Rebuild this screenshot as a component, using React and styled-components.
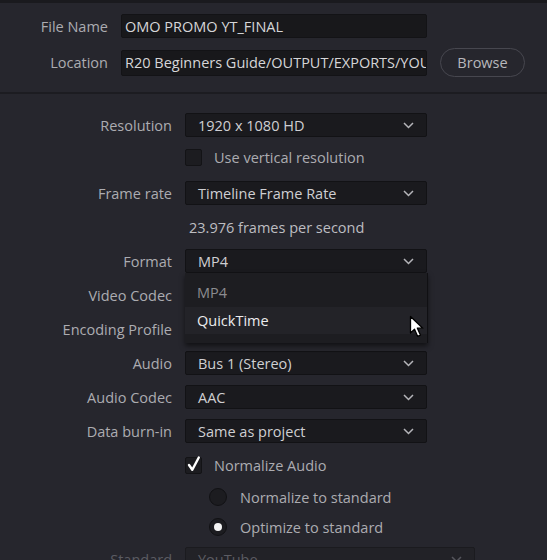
import React from "react";
import styled, { createGlobalStyle } from "styled-components";

const GlobalStyle = createGlobalStyle`
  html, body {
    margin: 0;
    padding: 0;
    background: #26262d;
  }
  body {
    font-family: "Open Sans", "Noto Sans", sans-serif;
    font-size: 14.5px;
  }
`;

const Panel = styled.div`
  width: 547px;
  height: 560px;
  overflow: hidden;
  background: #26262d;
  border-top: 3px solid #1a1a1e;
  box-sizing: border-box;
  color: #acacb1;
`;

const FileSection = styled.div`
  display: grid;
  grid-template-columns: 108px 306px 85px;
  column-gap: 13px;
  row-gap: 10px;
  align-items: center;
  padding: 11px 0 15px;
  border-bottom: 2px solid #1c1c21;
`;

const Label = styled.div`
  text-align: right;
  white-space: nowrap;
  color: ${(p) => (p.$disabled ? "#5b5b62" : "#acacb1")};
`;

const TextField = styled.div`
  height: ${(p) => p.$h || 24}px;
  box-sizing: border-box;
  background: #18181b;
  border: 1px solid #131316;
  border-radius: 2px;
  padding: 0 3px;
  display: flex;
  align-items: center;
  overflow: hidden;
  white-space: nowrap;
  color: #d6d6d8;
`;

const Browse = styled.button`
  height: 29px;
  border: 1px solid #47474f;
  border-radius: 15px;
  background: transparent;
  color: #b8b8bc;
  font-family: inherit;
  font-size: 14.5px;
  padding: 0;
`;

const Form = styled.div`
  display: flex;
  flex-direction: column;
  gap: 10px;
  padding-top: 19px;
`;

const Row = styled.div`
  display: grid;
  grid-template-columns: 172px auto;
  column-gap: 13px;
  align-items: center;
  height: ${(p) => p.$h || 24}px;
  margin-top: ${(p) => p.$shift || 0}px;
  margin-bottom: ${(p) => -(p.$shift || 0)}px;
`;

const Field = styled.div`
  position: relative;
  width: ${(p) => p.$w || 242}px;
`;

const Select = styled.div`
  height: 24px;
  box-sizing: border-box;
  background: ${(p) => (p.$disabled ? "#222227" : "#1a1a1e")};
  border: 1px solid ${(p) => (p.$disabled ? "#1b1b1f" : "#121215")};
  border-radius: 2px;
  display: flex;
  align-items: center;
  justify-content: space-between;
  padding: 0 12px;
  color: ${(p) => (p.$disabled ? "#5c5c63" : "#cfcfd2")};
`;

const Chevron = ({ color = "#b5b5b9" }) => (
  <svg width="11" height="7" viewBox="0 0 11 7">
    <path d="M1 1 L5.5 5.5 L10 1" fill="none" stroke={color} strokeWidth="1.5" />
  </svg>
);

const Menu = styled.div`
  position: absolute;
  top: 100%;
  left: 0;
  width: 100%;
  background: #1d1d21;
  border-right: 1px solid #101013;
  box-shadow: 0 3px 5px rgba(0, 0, 0, 0.55);
  padding-bottom: 9px;
  z-index: 5;
`;

const MenuItem = styled.div`
  height: ${(p) => p.$h}px;
  display: flex;
  align-items: center;
  padding: ${(p) => p.$pt || 0}px 12px 0;
  box-sizing: border-box;
  color: ${(p) => (p.$active ? "#ececee" : "#8c8c90")};
  background: ${(p) => (p.$active ? "#232328" : "transparent")};
`;

const Pointer = styled.svg`
  position: absolute;
  left: 224px;
  top: 42px;
`;

const Check = styled.div`
  display: flex;
  align-items: center;
  gap: 12px;
  margin-left: ${(p) => p.$indent || 0}px;
  color: #acacb1;
`;

const Box = styled.div`
  position: relative;
  width: 17px;
  height: 17px;
  box-sizing: border-box;
  background: #1c1c20;
  border: 1px solid #131316;
  border-radius: 2px;
`;

const Tick = styled.svg`
  position: absolute;
  left: 1px;
  top: -3px;
`;

const Radio = styled.div`
  width: 18px;
  height: 18px;
  box-sizing: border-box;
  border-radius: 50%;
  background: #1c1c20;
  border: 1px solid #111114;
  display: flex;
  align-items: center;
  justify-content: center;
  margin-right: 1px;
  &::after {
    content: "";
    display: ${(p) => (p.$on ? "block" : "none")};
    width: 8px;
    height: 8px;
    border-radius: 50%;
    background: #f4f4f4;
  }
`;

const Note = styled.div`
  color: #bdbdc1;
  padding-left: 4px;
`;

const Dropdown = ({ value, width, disabled, children }) => (
  <Field $w={width}>
    <Select $disabled={disabled}>
      <span>{value}</span>
      <Chevron color={disabled ? "#55555c" : "#b5b5b9"} />
    </Select>
    {children}
  </Field>
);

export default function App() {
  return (
    <>
      <GlobalStyle />
      <Panel>
        <FileSection>
          <Label>File Name</Label>
          <TextField>OMO PROMO YT_FINAL</TextField>
          <span />
          <Label>Location</Label>
          <TextField $h={26}>R20 Beginners Guide/OUTPUT/EXPORTS/YOUTUBE</TextField>
          <Browse>Browse</Browse>
        </FileSection>

        <Form>
          <Row>
            <Label>Resolution</Label>
            <Dropdown value="1920 x 1080 HD" />
          </Row>
          <Row $shift={-2}>
            <span />
            <Check>
              <Box />
              Use vertical resolution
            </Check>
          </Row>
          <Row>
            <Label>Frame rate</Label>
            <Dropdown value="Timeline Frame Rate" />
          </Row>
          <Row>
            <span />
            <Note>23.976 frames per second</Note>
          </Row>
          <Row>
            <Label>Format</Label>
            <Dropdown value="MP4">
              <Menu>
                <MenuItem $h={34} $pt={5}>
                  MP4
                </MenuItem>
                <MenuItem $h={27} $active>
                  QuickTime
                </MenuItem>
                <Pointer width="16" height="24" viewBox="0 0 16 24">
                  <path
                    d="M1.5 1.5 L1.5 18 L5.5 14.2 L8.6 21.3 L11.4 20.1 L8.4 13.2 L13.8 13.2 Z"
                    fill="#ffffff"
                    stroke="#000000"
                    strokeWidth="1.3"
                    strokeLinejoin="round"
                  />
                </Pointer>
              </Menu>
            </Dropdown>
          </Row>
          <Row>
            <Label>Video Codec</Label>
            <Dropdown value="H.264" />
          </Row>
          <Row>
            <Label>Encoding Profile</Label>
            <Dropdown value="Auto" />
          </Row>
          <Row>
            <Label>Audio</Label>
            <Dropdown value="Bus 1 (Stereo)" />
          </Row>
          <Row>
            <Label>Audio Codec</Label>
            <Dropdown value="AAC" />
          </Row>
          <Row>
            <Label>Data burn-in</Label>
            <Dropdown value="Same as project" />
          </Row>
          <Row>
            <span />
            <Check>
              <Box>
                <Tick width="14" height="18" viewBox="0 0 14 18">
                  <path
                    d="M2 10 L5.3 14.8 L11.8 2.5"
                    fill="none"
                    stroke="#ffffff"
                    strokeWidth="2.4"
                    strokeLinecap="round"
                    strokeLinejoin="round"
                  />
                </Tick>
              </Box>
              Normalize Audio
            </Check>
          </Row>
          <Row $h={20}>
            <span />
            <Check $indent={24}>
              <Radio />
              Normalize to standard
            </Check>
          </Row>
          <Row $h={20}>
            <span />
            <Check $indent={24}>
              <Radio $on />
              Optimize to standard
            </Check>
          </Row>
          <Row>
            <Label $disabled>Standard</Label>
            <Dropdown value="YouTube" width={290} disabled />
          </Row>
        </Form>
      </Panel>
    </>
  );
}
